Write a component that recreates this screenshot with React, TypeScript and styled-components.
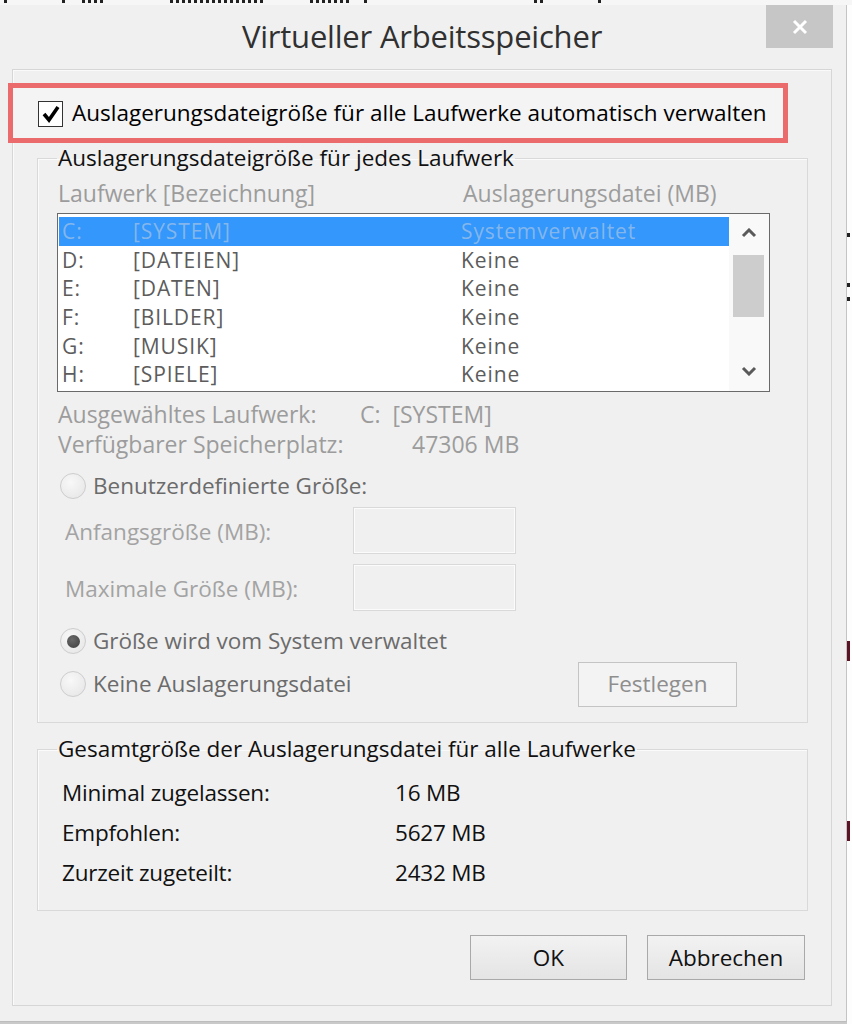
import styled, { createGlobalStyle } from 'styled-components'

//#region styles
const GlobalStyle = createGlobalStyle`
  html, body {
    margin: 0;
    padding: 0;
    background: #f7f7f7;
  }
  * {
    box-sizing: border-box;
  }
  body {
    font-family: "Open Sans", "Noto Sans", "DejaVu Sans", sans-serif;
    color: #1a1a1a;
  }
`
const Screen = styled.div`
  width: 852px;
  height: 1024px;
  display: flex;
  flex-direction: column;
  overflow: hidden;
  background: #c9c9c9;
`
const BehindStrip = styled.div`
  height: 5px;
  display: flex;
  align-items: flex-start;
  gap: 14px;
  padding-left: 4px;
  background: #f6f6f6;
`
const Mark = styled.div<{ $w: number; $ml?: number }>`
  width: ${p => p.$w}px;
  height: 3px;
  margin-left: ${p => p.$ml || 0}px;
  background: repeating-linear-gradient(90deg, #222 0 3px, transparent 3px 6px);
`
const Desk = styled.div`
  flex: 1;
  display: flex;
`
const Sliver = styled.div`
  flex: 1;
  display: flex;
  flex-direction: column;
  background: #fdfdfd;
`
const SliverMark = styled.div<{ $c: string; $mt: number; $h?: number }>`
  width: 3px;
  height: ${p => p.$h || 4}px;
  margin-top: ${p => p.$mt}px;
  background: ${p => p.$c};
`
const Window = styled.div`
  width: 847px;
  height: 1017px;
  display: flex;
  flex-direction: column;
  padding: 0 14px 15px 12px;
  background: #f0f0f0;
  border-right: 1px solid #c4c4c4;
  border-bottom: 1px solid #bdbdbd;
`
const TitleBar = styled.div`
  height: 64px;
  position: relative;
  display: flex;
  justify-content: center;
  align-items: center;
  flex-shrink: 0;
`
const Title = styled.div`
  font-size: 31px;
  line-height: 40px;
  color: #303030;
  letter-spacing: -0.2px;
  margin-top: -3px;
`
const CloseButton = styled.div`
  position: absolute;
  right: -1px;
  top: 0;
  width: 67px;
  height: 43px;
  display: flex;
  align-items: center;
  justify-content: center;
  background: #c6c6c6;
`
const Client = styled.div`
  flex: 1;
  display: flex;
  flex-direction: column;
  border: 1px solid #d6d6d6;
  box-shadow: inset 1px 1px 0 #fafafa;
`
const Highlight = styled.label`
  width: 780px;
  height: 60px;
  margin: 13px 0 0 -5px;
  display: flex;
  align-items: center;
  gap: 9px;
  padding-left: 25px;
  border: 5px solid #eb6b6c;
  background: #f4f4f4;
  font-size: 22.5px;
  line-height: 30px;
  color: #000;
  white-space: nowrap;
  flex-shrink: 0;
`
const CheckBox = styled.div`
  width: 25px;
  height: 26px;
  border: 1px solid #333;
  background: #fff;
  display: flex;
  align-items: center;
  justify-content: center;
  margin-top: 2px;
  flex-shrink: 0;
`
const Group = styled.fieldset<{ $mt: number; $pb: number }>`
  margin: ${p => p.$mt}px 23px 0 24px;
  padding: 0 0 ${p => p.$pb}px 20px;
  border: 1px solid #d9d9d9;
  box-shadow: inset 1px 1px 0 #fbfbfb;
  min-width: 0;
`
const GroupTitle = styled.legend`
  margin-left: -1px;
  padding: 0 1px;
  font-size: 22.5px;
  line-height: 24px;
  color: #111;
  white-space: nowrap;
`
const Columns = styled.div<{ $cols: string; $h: number; $mt?: number }>`
  display: grid;
  grid-template-columns: ${p => p.$cols};
  align-items: center;
  height: ${p => p.$h}px;
  line-height: ${p => p.$h}px;
  margin-top: ${p => p.$mt || 0}px;
  font-size: 23px;
  white-space: nowrap;
`
const Faded = styled.span<{ $indent?: number }>`
  color: #9c9c9c;
  padding-left: ${p => p.$indent || 0}px;
`
const DriveList = styled.div`
  width: 713px;
  height: 179px;
  margin: 8px 0 0 -1px;
  display: flex;
  border: 1px solid #6a6a6a;
  background: #fff;
`
const ListRows = styled.div`
  flex: 1;
  padding: 3px 0 0 1px;
  display: flex;
  flex-direction: column;
`
const DriveRow = styled.div<{ $selected?: boolean }>`
  height: 28.6px;
  line-height: 28px;
  display: grid;
  grid-template-columns: 71px 328px 1fr;
  align-items: center;
  padding-left: 3px;
  font-size: 21px;
  letter-spacing: 0.9px;
  white-space: nowrap;
  color: ${p => (p.$selected ? '#84b6ec' : '#5c5c5c')};
  background: ${p => (p.$selected ? '#3397fb' : 'transparent')};
`
const ScrollBar = styled.div`
  width: 40px;
  display: flex;
  flex-direction: column;
  align-items: center;
  padding: 0 3px 0 2px;
  background: #f9f9f9;
`
const ScrollArrow = styled.div<{ $h: number }>`
  height: ${p => p.$h}px;
  width: 100%;
  display: flex;
  align-items: center;
  justify-content: center;
`
const ScrollThumb = styled.div`
  width: 31px;
  height: 62px;
  margin-top: 3px;
  background: #cdcdcd;
`
const ScrollTrack = styled.div`
  flex: 1;
`
const RadioRow = styled.div<{ $mt: number }>`
  display: flex;
  align-items: center;
  gap: 7px;
  height: 30px;
  line-height: 30px;
  margin-top: ${p => p.$mt}px;
  padding-left: 2px;
  font-size: 22.5px;
  color: #6b6b6b;
  white-space: nowrap;
`
const Radio = styled.div<{ $checked?: boolean }>`
  width: 26px;
  height: 26px;
  border-radius: 50%;
  border: 1px solid #cdcdcd;
  background: radial-gradient(circle at 40% 35%, #f8f8f8, #e4e4e4);
  display: flex;
  align-items: center;
  justify-content: center;
  flex-shrink: 0;
  &::after {
    content: '';
    display: ${p => (p.$checked ? 'block' : 'none')};
    width: 13px;
    height: 13px;
    border-radius: 50%;
    background: radial-gradient(circle at 40% 35%, #6a6a6a, #3e3e3e);
  }
`
const FieldRow = styled.div<{ $mt: number }>`
  display: flex;
  align-items: center;
  height: 47px;
  line-height: 30px;
  margin-top: ${p => p.$mt}px;
  padding-left: 7px;
  font-size: 22.5px;
  white-space: nowrap;
`
const FieldLabel = styled.span`
  width: 288px;
  color: #a3a3a3;
  padding-top: 3px;
`
const SizeInput = styled.div`
  width: 163px;
  height: 47px;
  border: 1px solid #d9d9d9;
  box-shadow: inset 0 0 0 1px #fbfbfb;
  background: #f0f0f0;
`
const SplitRow = styled.div`
  display: flex;
  align-items: center;
  justify-content: space-between;
  height: 44px;
  margin-top: 6px;
  padding-right: 70px;
`
const Button = styled.div<{ $disabled?: boolean; $w: number }>`
  width: ${p => p.$w}px;
  height: 45px;
  line-height: 30px;
  display: flex;
  align-items: center;
  justify-content: center;
  font-size: 22.5px;
  color: ${p => (p.$disabled ? '#8e8e8e' : '#111')};
  border: 1px solid ${p => (p.$disabled ? '#c4c4c4' : '#a9a9a9')};
  background: ${p => (p.$disabled ? '#f3f3f3' : 'linear-gradient(#f2f2f2, #e4e4e4)')};
`
const TotalRow = styled.div`
  display: grid;
  grid-template-columns: 333px 1fr;
  align-items: center;
  height: 40px;
  line-height: 30px;
  padding-left: 4px;
  font-size: 22.5px;
  color: #111;
  letter-spacing: -0.2px;
  white-space: nowrap;
`
const TotalsBody = styled.div`
  margin-top: 12px;
`
const ButtonBar = styled.div`
  display: flex;
  justify-content: flex-end;
  gap: 20px;
  margin-top: 24px;
  padding-right: 26px;
`
//#endregion

const drives = [
  { letter: 'C:', name: '[SYSTEM]', size: 'Systemverwaltet' },
  { letter: 'D:', name: '[DATEIEN]', size: 'Keine' },
  { letter: 'E:', name: '[DATEN]', size: 'Keine' },
  { letter: 'F:', name: '[BILDER]', size: 'Keine' },
  { letter: 'G:', name: '[MUSIK]', size: 'Keine' },
  { letter: 'H:', name: '[SPIELE]', size: 'Keine' },
]

const totals = [
  { label: 'Minimal zugelassen:', value: '16 MB' },
  { label: 'Empfohlen:', value: '5627 MB' },
  { label: 'Zurzeit zugeteilt:', value: '2432 MB' },
]

const Chevron = ({ up }: { up?: boolean }) => (
  <svg width="16" height="10" viewBox="0 0 16 10">
    <polyline
      points={up ? '2,8 8,2 14,8' : '2,2 8,8 14,2'}
      fill="none"
      stroke="#5a5a5a"
      strokeWidth="3"
    />
  </svg>
)

export default function App() {
  return (
    <Screen>
      <GlobalStyle />
      <BehindStrip>
        <Mark $w={4} />
        <Mark $w={6} $ml={40} />
        <Mark $w={24} />
        <Mark $w={96} $ml={50} />
        <Mark $w={40} $ml={30} />
        <Mark $w={6} />
        <Mark $w={10} $ml={150} />
        <Mark $w={6} $ml={40} />
      </BehindStrip>
      <Desk>
        <Window>
          <TitleBar>
            <Title>Virtueller Arbeitsspeicher</Title>
            <CloseButton>
              <svg width="16" height="16" viewBox="0 0 16 16">
                <path d="M2 2 L14 14 M14 2 L2 14" stroke="#fff" strokeWidth="3" />
              </svg>
            </CloseButton>
          </TitleBar>
          <Client>
            <Highlight>
              <CheckBox>
                <svg width="20" height="20" viewBox="0 0 20 20">
                  <path d="M3 10 L8 16 L17 3" fill="none" stroke="#000" strokeWidth="3.6" />
                </svg>
              </CheckBox>
              Auslagerungsdateigröße für alle Laufwerke automatisch verwalten
            </Highlight>

            <Group $mt={3} $pb={16}>
              <GroupTitle>Auslagerungsdateigröße für jedes Laufwerk</GroupTitle>
              <Columns $cols="405px 1fr" $h={24} $mt={11}>
                <Faded>Laufwerk [Bezeichnung]</Faded>
                <Faded>Auslagerungsdatei (MB)</Faded>
              </Columns>
              <DriveList>
                <ListRows>
                  {drives.map((d, i) => (
                    <DriveRow key={d.letter} $selected={i === 0}>
                      <span>{d.letter}</span>
                      <span>{d.name}</span>
                      <span>{d.size}</span>
                    </DriveRow>
                  ))}
                </ListRows>
                <ScrollBar>
                  <ScrollArrow $h={38}><Chevron up /></ScrollArrow>
                  <ScrollThumb />
                  <ScrollTrack />
                  <ScrollArrow $h={40}><Chevron /></ScrollArrow>
                </ScrollBar>
              </DriveList>
              <Columns $cols="302px 1fr" $h={30} $mt={7}>
                <Faded>Ausgewähltes Laufwerk:</Faded>
                <Faded>C:&nbsp;&nbsp;[SYSTEM]</Faded>
              </Columns>
              <Columns $cols="302px 1fr" $h={30}>
                <Faded>Verfügbarer Speicherplatz:</Faded>
                <Faded $indent={52}>47306 MB</Faded>
              </Columns>
              <RadioRow $mt={12}>
                <Radio />
                Benutzerdefinierte Größe:
              </RadioRow>
              <FieldRow $mt={6}>
                <FieldLabel>Anfangsgröße (MB):</FieldLabel>
                <SizeInput />
              </FieldRow>
              <FieldRow $mt={10}>
                <FieldLabel>Maximale Größe (MB):</FieldLabel>
                <SizeInput />
              </FieldRow>
              <RadioRow $mt={15}>
                <Radio $checked />
                Größe wird vom System verwaltet
              </RadioRow>
              <SplitRow>
                <RadioRow $mt={0}>
                  <Radio />
                  Keine Auslagerungsdatei
                </RadioRow>
                <Button $disabled $w={159}>Festlegen</Button>
              </SplitRow>
            </Group>

            <Group $mt={14} $pb={17}>
              <GroupTitle>Gesamtgröße der Auslagerungsdatei für alle Laufwerke</GroupTitle>
              <TotalsBody>
                {totals.map(t => (
                  <TotalRow key={t.label}>
                    <span>{t.label}</span>
                    <span>{t.value}</span>
                  </TotalRow>
                ))}
              </TotalsBody>
            </Group>

            <ButtonBar>
              <Button $w={157}>OK</Button>
              <Button $w={158}>Abbrechen</Button>
            </ButtonBar>
          </Client>
        </Window>
        <Sliver>
          <SliverMark $c="#222" $mt={228} />
          <SliverMark $c="#222" $mt={46} />
          <SliverMark $c="#222" $mt={10} />
          <SliverMark $c="#5a1424" $mt={340} $h={20} />
          <SliverMark $c="#5a1424" $mt={160} $h={20} />
        </Sliver>
      </Desk>
    </Screen>
  )
}
